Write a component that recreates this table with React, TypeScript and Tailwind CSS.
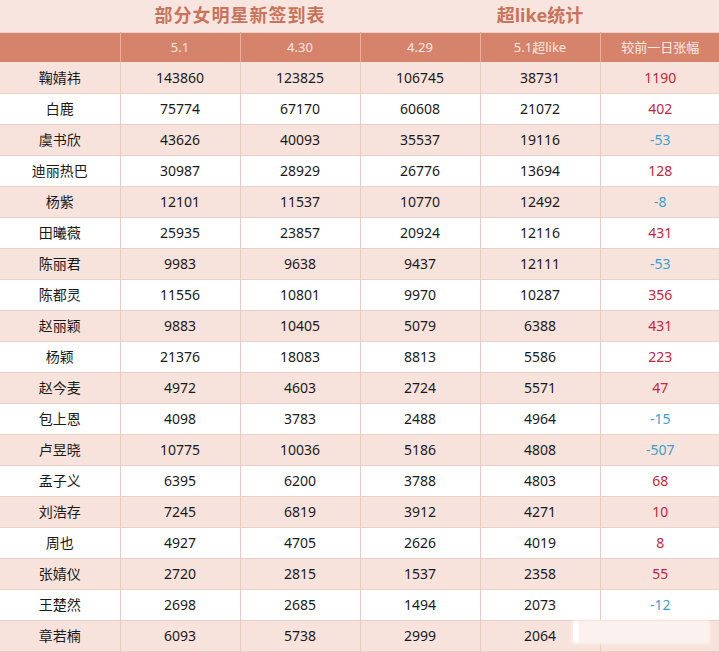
import React from "react";

type Row = {
  name: string;
  d51: number;
  d430: number;
  d429: number;
  like: number;
  diff: number | null;
};

const rows: Row[] = [
  { name: "鞠婧祎", d51: 143860, d430: 123825, d429: 106745, like: 38731, diff: 1190 },
  { name: "白鹿", d51: 75774, d430: 67170, d429: 60608, like: 21072, diff: 402 },
  { name: "虞书欣", d51: 43626, d430: 40093, d429: 35537, like: 19116, diff: -53 },
  { name: "迪丽热巴", d51: 30987, d430: 28929, d429: 26776, like: 13694, diff: 128 },
  { name: "杨紫", d51: 12101, d430: 11537, d429: 10770, like: 12492, diff: -8 },
  { name: "田曦薇", d51: 25935, d430: 23857, d429: 20924, like: 12116, diff: 431 },
  { name: "陈丽君", d51: 9983, d430: 9638, d429: 9437, like: 12111, diff: -53 },
  { name: "陈都灵", d51: 11556, d430: 10801, d429: 9970, like: 10287, diff: 356 },
  { name: "赵丽颖", d51: 9883, d430: 10405, d429: 5079, like: 6388, diff: 431 },
  { name: "杨颖", d51: 21376, d430: 18083, d429: 8813, like: 5586, diff: 223 },
  { name: "赵今麦", d51: 4972, d430: 4603, d429: 2724, like: 5571, diff: 47 },
  { name: "包上恩", d51: 4098, d430: 3783, d429: 2488, like: 4964, diff: -15 },
  { name: "卢昱晓", d51: 10775, d430: 10036, d429: 5186, like: 4808, diff: -507 },
  { name: "孟子义", d51: 6395, d430: 6200, d429: 3788, like: 4803, diff: 68 },
  { name: "刘浩存", d51: 7245, d430: 6819, d429: 3912, like: 4271, diff: 10 },
  { name: "周也", d51: 4927, d430: 4705, d429: 2626, like: 4019, diff: 8 },
  { name: "张婧仪", d51: 2720, d430: 2815, d429: 1537, like: 2358, diff: 55 },
  { name: "王楚然", d51: 2698, d430: 2685, d429: 1494, like: 2073, diff: -12 },
  { name: "章若楠", d51: 6093, d430: 5738, d429: 2999, like: 2064, diff: null },
];

const headers = ["5.1", "4.30", "4.29", "5.1超like", "较前一日张幅"];

export default function App() {
  return (
    <div
      className="relative w-[719px] h-[652px] overflow-hidden bg-white text-[14px] text-[#1a1a1a]"
      style={{ fontFamily: '"Noto Sans", "Noto Sans CJK SC", sans-serif' }}
    >
      <table className="w-[720px] table-fixed border-collapse">
        <colgroup>
          <col className="w-[120px]" />
          <col className="w-[120px]" />
          <col className="w-[120px]" />
          <col className="w-[120px]" />
          <col className="w-[120px]" />
          <col className="w-[120px]" />
        </colgroup>
        <thead>
          <tr className="h-[32px] bg-[#f8e5df] border-b border-[#ecd2c8]">
            <th />
            <th colSpan={2} className="text-[18px] font-bold text-[#c8735a] tracking-[1px]">
              部分女明星新签到表
            </th>
            <th colSpan={3} className="text-[18px] font-bold text-[#c8735a]">
              超like统计
            </th>
          </tr>
          <tr className="h-[30px] bg-[#d6836b]">
            <th className="border-r border-[#eab09c]" />
            {headers.map((h) => (
              <th
                key={h}
                className="border-r border-[#eab09c] last:border-r-0 font-normal text-[13px] text-[#fbe9e2]"
              >
                {h}
              </th>
            ))}
          </tr>
        </thead>
        <tbody>
          {rows.map((r, i) => (
            <tr
              key={r.name}
              className={`h-[31px] border-b border-[#ebcfc4] ${i % 2 === 0 ? "bg-[#f8e3dc]" : "bg-white"}`}
            >
              <td className="border-r border-[#e8cabe] text-center">{r.name}</td>
              <td className="border-r border-[#e8cabe] text-center">{r.d51}</td>
              <td className="border-r border-[#e8cabe] text-center">{r.d430}</td>
              <td className="border-r border-[#e8cabe] text-center">{r.d429}</td>
              <td className="border-r border-[#e8cabe] text-center">{r.like}</td>
              <td
                className={`text-center ${r.diff !== null && r.diff < 0 ? "text-[#3a9fd0]" : "text-[#c3243e]"}`}
              >
                {r.diff ?? ""}
              </td>
            </tr>
          ))}
        </tbody>
      </table>
      {/* blurred watermark */}
      <div className="absolute left-[572px] top-[620px] h-[24px] w-[138px] rounded-sm bg-[#fbf1ee] blur-[1.5px]" />
      <div className="absolute left-[573px] top-[621px] h-[22px] w-[6px] rounded bg-white" />
    </div>
  );
}
